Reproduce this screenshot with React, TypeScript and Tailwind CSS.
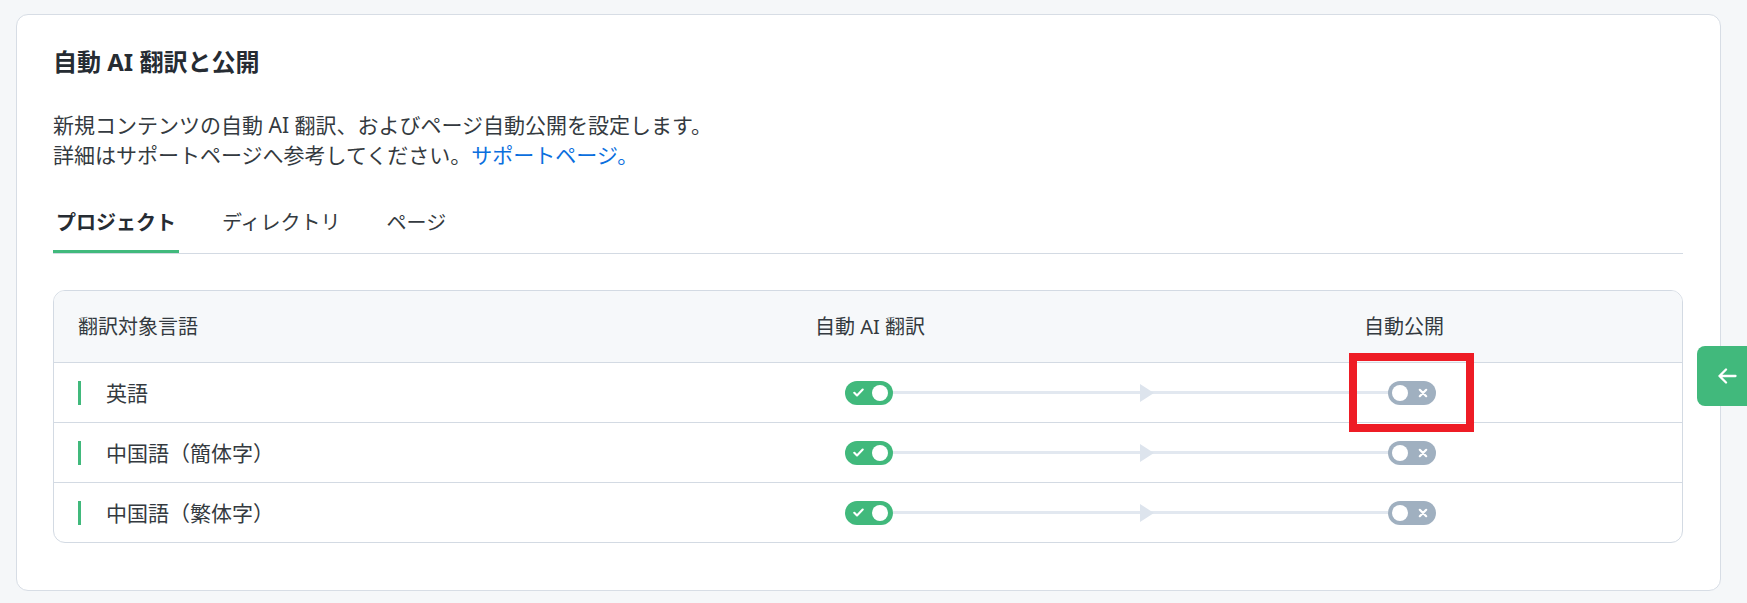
import React from "react";

const GREEN = "bg-[#41b97c]";

function OnToggle() {
  return (
    <div className="flex h-6 w-12 shrink-0 items-center justify-between rounded-full bg-[#41b97c] pl-[8px] pr-[5px]">
      <svg width="11" height="9" viewBox="0 0 11 9" fill="none">
        <path d="M1.3 4.8 L4 7.4 L9.7 1.5" stroke="white" strokeWidth="2.1" strokeLinecap="round" strokeLinejoin="round" />
      </svg>
      <div className="h-4 w-4 rounded-full bg-white" />
    </div>
  );
}

function OffToggle() {
  return (
    <div className="flex h-6 w-12 shrink-0 items-center justify-between rounded-full bg-[#a0b0c0] pl-[4px] pr-[8px]">
      <div className="h-4 w-4 rounded-full bg-white" />
      <svg width="10" height="10" viewBox="0 0 10 10" fill="none">
        <path d="M1.8 1.8 L8.2 8.2 M8.2 1.8 L1.8 8.2" stroke="white" strokeWidth="2.2" strokeLinecap="round" />
      </svg>
    </div>
  );
}

function Row({ label, h, last }: { label: string; h: string; last?: boolean }) {
  return (
    <div className={`flex items-center pl-6 ${h} ${last ? "" : "border-b border-[#d3dae3]"}`}>
      <div className="flex w-[767px] shrink-0 items-center">
        <div className={`h-6 w-[3px] ${GREEN}`} />
        <span className="ml-[25px] text-[21px] leading-[28px] text-[#343a40] [text-spacing-trim:space-all]">{label}</span>
      </div>
      <OnToggle />
      <div className="relative flex h-6 w-[495px] shrink-0 items-center">
        <div className="h-[3px] w-full bg-[#e2e8f0]" />
        <svg className="absolute left-[247px] top-[3px]" width="14" height="18" viewBox="0 0 14 18">
          <polygon points="0,0 14,9 0,18" fill="#dde4ed" />
        </svg>
      </div>
      <OffToggle />
    </div>
  );
}

export default function App() {
  return (
    <div className="relative min-h-[603px] bg-[#f5f7f9] pl-4 pr-[26px] pt-[14px] font-['Noto_Sans','Noto_Sans_CJK_JP',sans-serif] text-[#343a40]">
      <div className="rounded-[12px] border border-[#d7dde5] bg-white pb-[47px] pl-[36px] pr-[37px] pt-[31px]">
        <h1 className="text-[24px] font-bold leading-[32px] text-[#262c33]">自動 AI 翻訳と公開</h1>
        <div className="mt-8 text-[21px] leading-[30px] text-[#343a40]">
          <p>新規コンテンツの自動 AI 翻訳、およびページ自動公開を設定します。</p>
          <p>
            詳細はサポートページへ参考してください。
            <a className="text-[#0b6fde]">サポートページ。</a>
          </p>
        </div>

        <div className="mt-[39px] flex gap-10 border-b border-[#d3dae3]">
          <div className="border-b-[3px] border-[#41b97c] px-[3px] pb-[13px] text-[20px] font-bold leading-[28px] text-[#262c33]">
            プロジェクト
          </div>
          <div className="border-b-[3px] border-transparent px-[3px] pb-[13px] text-[20px] leading-[28px] text-[#343a40]">
            ディレクトリ
          </div>
          <div className="border-b-[3px] border-transparent px-[3px] pb-[13px] text-[20px] leading-[28px] text-[#343a40]">
            ページ
          </div>
        </div>

        <div className="mt-9 overflow-hidden rounded-[12px] border border-[#d3dae3]">
          <div className="flex h-[72px] items-center border-b border-[#d3dae3] bg-[#f6f8fa] pl-6 text-[20px] leading-[28px] text-[#343a40]">
            <div className="w-[692px] shrink-0">翻訳対象言語</div>
            <div className="w-[200px] shrink-0 text-center">自動 AI 翻訳</div>
            <div className="ml-[334px] w-[200px] shrink-0 text-center">自動公開</div>
          </div>
          <Row label="英語" h="h-[60px]" />
          <Row label="中国語（簡体字）" h="h-[60px]" />
          <Row label="中国語（繁体字）" h="h-[59px]" last />
        </div>
      </div>

      <div className="absolute right-0 top-[346px] flex h-[60px] w-[50px] items-center justify-center rounded-l-[8px] bg-[#41b97c] pl-[10px]">
        <svg width="19" height="16" viewBox="0 0 19 16" fill="none">
          <path d="M8 1.5 L1.5 8 L8 14.5 M1.5 8 H17.5" stroke="white" strokeWidth="2.3" strokeLinecap="round" strokeLinejoin="round" />
        </svg>
      </div>

      <div className="absolute left-[1349px] top-[353px] h-[79px] w-[125px] border-[8px] border-[#ee1c25]" />
    </div>
  );
}
